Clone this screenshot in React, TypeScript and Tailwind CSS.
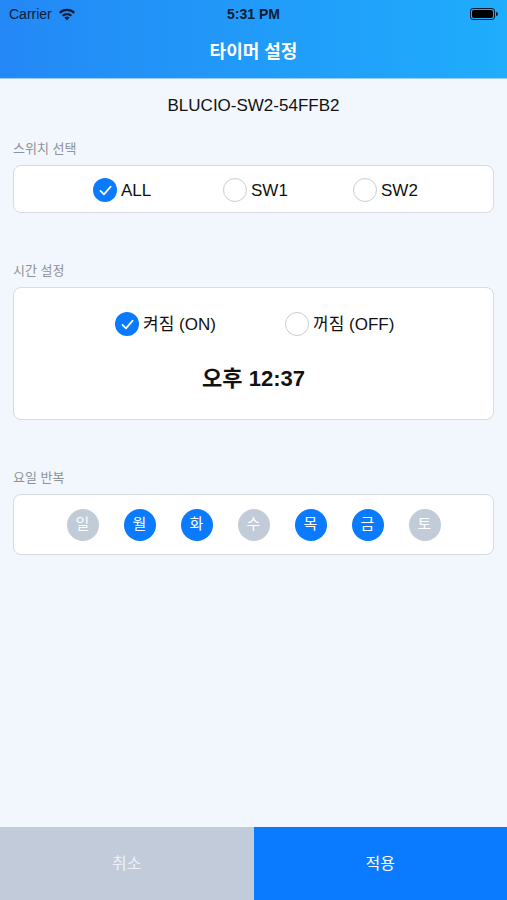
import { useState } from "react";

const FONT = { fontFamily: '"Liberation Sans", "Noto Sans CJK KR", sans-serif' };

const Radio = ({ checked, label, onClick }: { checked: boolean; label: string; onClick: () => void }) => (
  <button className="flex items-center gap-[4px] cursor-pointer" onClick={onClick}>
    {checked ? (
      <span className="flex items-center justify-center w-[24px] h-[24px] rounded-full bg-[#0A7AFF]">
        <svg width="15" height="15" viewBox="0 0 14 14" fill="none">
          <path d="M2.3 7.3 L5.6 10.6 L11.8 3.4" stroke="white" strokeWidth="1.6" strokeLinecap="round" strokeLinejoin="round" />
        </svg>
      </span>
    ) : (
      <span className="w-[24px] h-[24px] rounded-full bg-white border-[1.5px] border-[#C9CCD1]" />
    )}
    <span className="text-[17px] text-[#111] leading-none">{label}</span>
  </button>
);

const Label = ({ text, className }: { text: string; className: string }) => (
  <p className={`px-[13px] h-[18px] leading-[18px] text-[13px] text-[#8E9299] ${className}`}>{text}</p>
);

const DAYS = ["일", "월", "화", "수", "목", "금", "토"];

export default function App() {
  const [sw, setSw] = useState("ALL");
  const [power, setPower] = useState("ON");
  const [days, setDays] = useState<boolean[]>([false, true, true, false, true, true, false]);

  const toggleDay = (i: number) => {
    setDays((prev) => prev.map((d, idx) => (idx === i ? !d : d)));
  };

  return (
    <div className="flex flex-col w-full h-[900px] bg-[#F2F7FD]" style={FONT}>
      <div className="h-[79px] bg-gradient-to-r from-[#2488F6] to-[#1FADFC] border-b border-[#9CCBF5]">
        <div className="relative h-[28px] flex items-center px-[9px]">
          <span className="text-[14px] text-[#0B1B33]">Carrier</span>
          <svg className="ml-[6px]" width="18" height="13" viewBox="0 0 18 13">
            <path d="M9 12.5 L6.4 9.6 A3.8 3.8 0 0 1 11.6 9.6 Z" fill="#0B1B33" />
            <path d="M3.9 7 A7.3 7.3 0 0 1 14.1 7 L12.6 8.6 A5.2 5.2 0 0 0 5.4 8.6 Z" fill="#0B1B33" />
            <path d="M1 4.1 A11.4 11.4 0 0 1 17 4.1 L15.5 5.7 A9.3 9.3 0 0 0 2.5 5.7 Z" fill="#0B1B33" />
          </svg>
          <span className="absolute left-1/2 -translate-x-1/2 text-[14px] font-bold text-[#0B1B33]">5:31 PM</span>
          <span className="ml-auto flex items-center">
            <span className="w-[25px] h-[12px] rounded-[3px] border border-[#0B1B33] p-[1px]">
              <span className="block w-full h-full rounded-[2px] bg-black" />
            </span>
            <span className="w-[2px] h-[4px] rounded-r-sm bg-[#0B1B33] ml-[1px]" />
          </span>
        </div>
        <div className="h-[46px] pt-[3px] flex items-center justify-center">
          <h1 className="text-[18px] font-semibold text-white">타이머 설정</h1>
        </div>
      </div>

      <p className="mt-[17px] h-[20px] leading-[20px] text-center text-[17px] text-[#111]">BLUCIO-SW2-54FFB2</p>

      <Label text="스위치 선택" className="mt-[24px]" />
      <div className="mx-[13px] mt-[7px] h-[48px] bg-white border border-[#D6DBE1] rounded-[8px] flex items-center pl-[79px] pt-[2px]">
        {["ALL", "SW1", "SW2"].map((s) => (
          <div key={s} className="w-[130px] flex">
            <Radio checked={sw === s} label={s} onClick={() => setSw(s)} />
          </div>
        ))}
      </div>

      <Label text="시간 설정" className="mt-[49px]" />
      <div className="mx-[13px] mt-[7px] h-[133px] bg-white border border-[#D6DBE1] rounded-[8px] flex flex-col">
        <div className="flex items-center pl-[101px] mt-[24px]">
          <div className="w-[170px] flex">
            <Radio checked={power === "ON"} label="켜짐 (ON)" onClick={() => setPower("ON")} />
          </div>
          <Radio checked={power === "OFF"} label="꺼짐 (OFF)" onClick={() => setPower("OFF")} />
        </div>
        <p className="mt-[30px] text-center text-[22px] font-bold text-[#111] leading-[26px]">오후 12:37</p>
      </div>

      <Label text="요일 반복" className="mt-[49px]" />
      <div className="mx-[13px] mt-[7px] h-[61px] bg-white border border-[#D6DBE1] rounded-[8px] flex items-center justify-center gap-[25px]">
        {DAYS.map((d, i) => (
          <button
            key={d}
            onClick={() => toggleDay(i)}
            className={`w-[32px] h-[32px] rounded-full flex items-center justify-center text-[15px] text-white cursor-pointer ${
              days[i] ? "bg-[#0A7AFF]" : "bg-[#C2CBD8]"
            }`}
          >
            {d}
          </button>
        ))}
      </div>

      <div className="flex-1" />

      <div className="flex h-[73px]">
        <button className="flex-1 bg-[#C1CBDA] text-[16px] text-[#EEF2F7]">취소</button>
        <button className="flex-1 bg-[#0A7AFF] text-[16px] text-white">적용</button>
      </div>
    </div>
  );
}
